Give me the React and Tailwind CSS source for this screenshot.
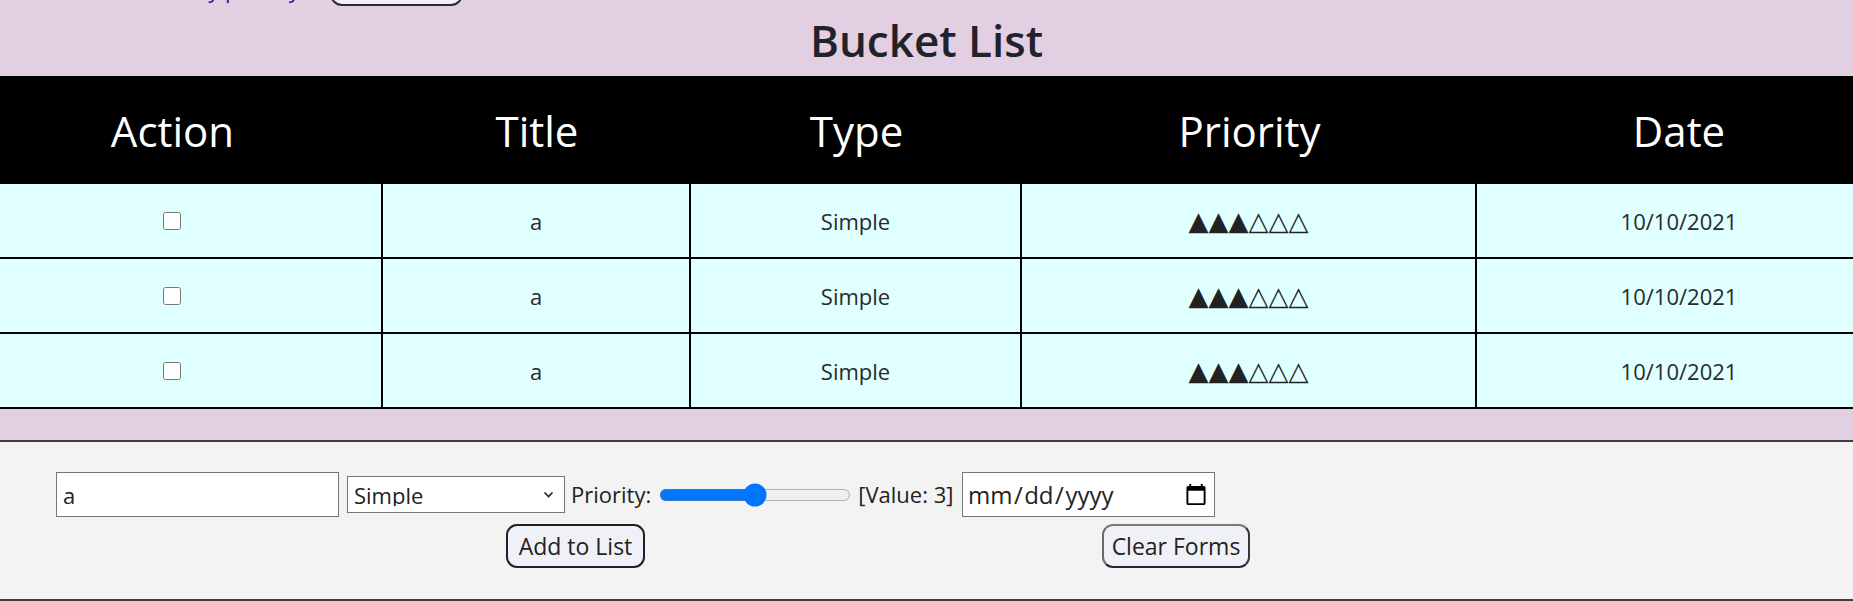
import { useState } from 'react'

const items = [
  { id: 1, title: 'a', type: 'Simple', priority: 3, date: '10/10/2021' },
  { id: 2, title: 'a', type: 'Simple', priority: 3, date: '10/10/2021' },
  { id: 3, title: 'a', type: 'Simple', priority: 3, date: '10/10/2021' },
]

const cols = 'grid grid-cols-[421px_308px_331px_455px_404px]'

function Triangles({ value, max = 6 }) {
  return (
    <span className="font-['DejaVu_Sans',sans-serif] text-[26px] leading-none text-[#222]">
      {'▲'.repeat(value)}
      {'△'.repeat(max - value)}
    </span>
  )
}

export default function App() {
  const [title, setTitle] = useState('a')
  const [type, setType] = useState('Simple')
  const [priority, setPriority] = useState(3)

  return (
    <div className="h-[601px] overflow-hidden bg-[#e2cfe2] font-['Open_Sans','Noto_Sans',sans-serif] text-[#222]">
      {/* top nav, scrolled mostly out of view */}
      <div className="h-[7px] overflow-hidden flex items-end">
        <span className="ml-[147px] mb-[7px] text-[22px] leading-[22px] text-[#1a1a9a]">Sort by priority</span>
        <button className="ml-[30px] mb-[1px] w-[133px] h-[40px] shrink-0 rounded-[12px] border-2 border-[#2a2a35] bg-[#f0f0f7]" />
      </div>

      {/* title */}
      <div className="h-[69px] flex items-start justify-center pt-[8px]">
        <h1 className="text-[44px] font-semibold leading-[50px] text-[#22222c]">Bucket List</h1>
      </div>

      {/* table, wider than the window */}
      <div className="overflow-hidden">
        <div className="ml-[-38px] w-[1919px]">
          <div className={`${cols} h-[108px] bg-black text-white text-[42px] text-center items-center`}>
            <div>Action</div>
            <div>Title</div>
            <div>Type</div>
            <div>Priority</div>
            <div>Date</div>
          </div>
          {items.map(item => (
            <div key={item.id} className={`${cols} h-[75px] bg-[#e0ffff] border-b-2 border-black text-[22px] text-[#2a2a2a]`}>
              <div className="flex items-center justify-center border-r-2 border-black">
                <input type="checkbox" className="w-[18px] h-[18px] m-0 ml-[1px]" />
              </div>
              <div className="flex items-center justify-center border-r-2 border-black pt-[2px]">{item.title}</div>
              <div className="flex items-center justify-center border-r-2 border-black pt-[2px]">{item.type}</div>
              <div className="flex items-center justify-center border-r-2 border-black">
                <Triangles value={item.priority} />
              </div>
              <div className="flex items-center justify-center pt-[2px]">{item.date}</div>
            </div>
          ))}
        </div>
      </div>

      <div className="h-[31px]" />

      {/* form */}
      <div className="h-[161px] border-t-2 border-b-2 border-[#3c3c46] bg-[#f3f3f3] pt-[30px] text-[22px]">
        <div className="h-[45px] flex items-center pl-[56px]">
          <input
            value={title}
            onChange={e => setTitle(e.target.value)}
            className="w-[283px] h-[45px] border border-[#767676] bg-white px-[6px] text-[22px]"
          />
          <div className="relative ml-[8px]">
            <select
              value={type}
              onChange={e => setType(e.target.value)}
              className="appearance-none w-[218px] h-[37px] border border-[#767676] bg-white pl-[6px] text-[22px] leading-none"
            >
              <option>Simple</option>
              <option>Complex</option>
            </select>
            <svg className="pointer-events-none absolute right-[11px] top-[15px]" width="11" height="7" viewBox="0 0 11 7">
              <path d="M1.5 1.5l4 4 4-4" fill="none" stroke="#222" strokeWidth="1.7" />
            </svg>
          </div>
          <span className="ml-[6px]">Priority:</span>
          <div className="ml-[8px] flex items-center">
            <input
              type="range"
              min="1"
              max="5"
              value={priority}
              onChange={e => setPriority(Number(e.target.value))}
              className="m-0 w-[128px] [zoom:1.5]"
            />
          </div>
          <span className="ml-[7px]">[Value: {priority}]</span>
          <input
            type="date"
            className="ml-[6px] w-[168.67px] h-[30px] border border-[#767676] bg-white px-[2px] text-[16px] [zoom:1.5]"
          />
        </div>
        <div className="mt-[7px] flex pl-[506px]">
          <button className="w-[139px] h-[44px] rounded-[11px] border-2 border-[#1f1f28] bg-[#f0f0f7] text-[23px]">
            Add to List
          </button>
          <button className="ml-[457px] w-[148px] h-[44px] rounded-[11px] border-2 border-t-[#7a7a7a] border-l-[#6a6a6a] border-r-[#35353d] border-b-[#25252d] bg-[#f0f0f7] text-[23px]">
            Clear Forms
          </button>
        </div>
      </div>
    </div>
  )
}
